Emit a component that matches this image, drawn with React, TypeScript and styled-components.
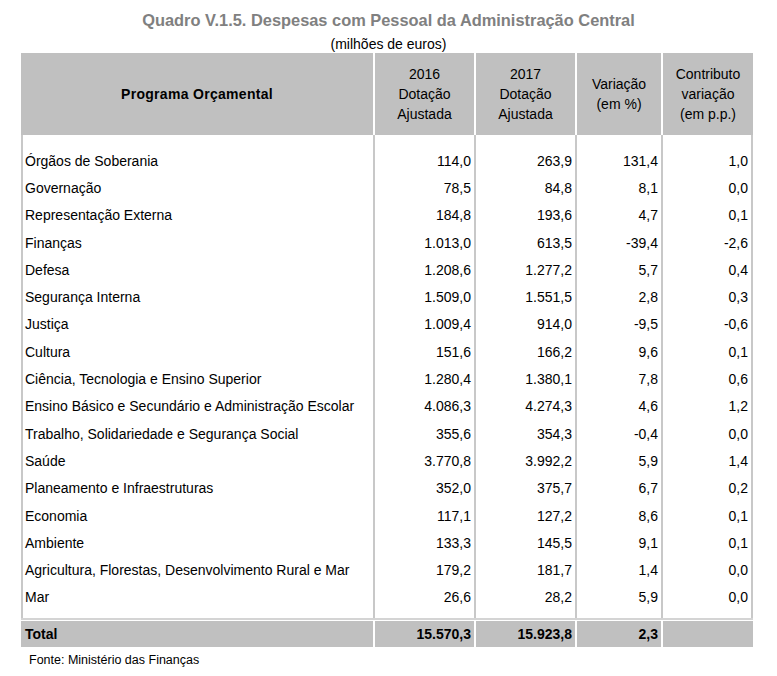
import React from "react";
import styled, { createGlobalStyle } from "styled-components";

const GlobalStyle = createGlobalStyle`
  html, body { margin: 0; padding: 0; background: #ffffff; }
  body { font-family: "Liberation Sans", Arial, Helvetica, sans-serif; color: #000; }
`;

const COLS = "352px 101px 101px 86px 92px";
const HEAD_BG = "#c0c0c0";
const LINE = "#c8c8c8";

const Page = styled.div`
  width: 777px;
  padding-top: 10px;
  box-sizing: border-box;
`;

const Title = styled.h1`
  margin: 0 0 5px;
  text-align: center;
  font-size: 16.4px;
  line-height: 20px;
  font-weight: bold;
  color: #808080;
`;

const Subtitle = styled.div`
  text-align: center;
  font-size: 14px;
  line-height: 18px;
`;

const Table = styled.div`
  margin-left: 21px;
  width: 732px;
`;

const Row = styled.div<{ $h: number }>`
  display: grid;
  grid-template-columns: ${COLS};
  height: ${(p) => p.$h}px;
`;

const HeadCell = styled.div<{ $first?: boolean }>`
  background: ${HEAD_BG};
  border-left: ${(p) => (p.$first ? "none" : "2px solid #ffffff")};
  display: flex;
  align-items: center;
  justify-content: center;
  text-align: center;
  font-size: 14px;
  line-height: 20px;
  font-weight: ${(p) => (p.$first ? "bold" : "normal")};
  letter-spacing: ${(p) => (p.$first ? "0.3px" : "0")};
`;

const Body = styled.div`
  border-bottom: 2px solid #d4d4d4;
  margin-bottom: 1px;
`;

const Cell = styled.div<{ $num?: boolean; $last?: boolean }>`
  box-sizing: border-box;
  border-left: 2px solid ${LINE};
  border-right: ${(p) => (p.$last ? `2px solid ${LINE}` : "none")};
  display: flex;
  align-items: center;
  justify-content: ${(p) => (p.$num ? "flex-end" : "flex-start")};
  padding: ${(p) => (p.$num ? "0 3px 0 0" : "0 0 0 2px")};
  font-size: 14px;
  white-space: nowrap;
`;

const TotalCell = styled.div<{ $num?: boolean; $first?: boolean }>`
  background: ${HEAD_BG};
  border-left: ${(p) => (p.$first ? "none" : "2px solid #ffffff")};
  display: flex;
  align-items: center;
  justify-content: ${(p) => (p.$num ? "flex-end" : "flex-start")};
  padding: ${(p) => (p.$num ? "0 3px 0 0" : "0 0 0 4px")};
  font-size: 14px;
  font-weight: bold;
`;

const Source = styled.div`
  margin-top: 5px;
  padding-left: 29px;
  font-size: 12.5px;
  line-height: 16px;
`;

const rows: string[][] = [
  ["Órgãos de Soberania", "114,0", "263,9", "131,4", "1,0"],
  ["Governação", "78,5", "84,8", "8,1", "0,0"],
  ["Representação Externa", "184,8", "193,6", "4,7", "0,1"],
  ["Finanças", "1.013,0", "613,5", "-39,4", "-2,6"],
  ["Defesa", "1.208,6", "1.277,2", "5,7", "0,4"],
  ["Segurança Interna", "1.509,0", "1.551,5", "2,8", "0,3"],
  ["Justiça", "1.009,4", "914,0", "-9,5", "-0,6"],
  ["Cultura", "151,6", "166,2", "9,6", "0,1"],
  ["Ciência, Tecnologia e Ensino Superior", "1.280,4", "1.380,1", "7,8", "0,6"],
  ["Ensino Básico e Secundário e Administração Escolar", "4.086,3", "4.274,3", "4,6", "1,2"],
  ["Trabalho, Solidariedade e Segurança Social", "355,6", "354,3", "-0,4", "0,0"],
  ["Saúde", "3.770,8", "3.992,2", "5,9", "1,4"],
  ["Planeamento e Infraestruturas", "352,0", "375,7", "6,7", "0,2"],
  ["Economia", "117,1", "127,2", "8,6", "0,1"],
  ["Ambiente", "133,3", "145,5", "9,1", "0,1"],
  ["Agricultura, Florestas, Desenvolvimento Rural e Mar", "179,2", "181,7", "1,4", "0,0"],
  ["Mar", "26,6", "28,2", "5,9", "0,0"],
];

const emptyRow = (h: number, key: string) => (
  <Row $h={h} key={key}>
    {[0, 1, 2, 3, 4].map((i) => (
      <Cell key={i} $last={i === 4} />
    ))}
  </Row>
);

export default function App() {
  return (
    <>
      <GlobalStyle />
      <Page>
        <Title>Quadro V.1.5. Despesas com Pessoal da Administração Central</Title>
        <Subtitle>(milhões de euros)</Subtitle>
        <Table>
          <Row $h={82}>
            <HeadCell $first>Programa Orçamental</HeadCell>
            <HeadCell>
              2016
              <br />
              Dotação
              <br />
              Ajustada
            </HeadCell>
            <HeadCell>
              2017
              <br />
              Dotação
              <br />
              Ajustada
            </HeadCell>
            <HeadCell>
              Variação
              <br />
              (em %)
            </HeadCell>
            <HeadCell>
              Contributo
              <br />
              variação
              <br />
              (em p.p.)
            </HeadCell>
          </Row>
          <Body>
            {emptyRow(12, "top")}
            {rows.map((r) => (
              <Row $h={27.3} key={r[0]}>
                {r.map((v, i) => (
                  <Cell key={i} $num={i > 0} $last={i === 4}>
                    {v}
                  </Cell>
                ))}
              </Row>
            ))}
            {emptyRow(7, "bottom")}
          </Body>
          <Row $h={26}>
            <TotalCell $first>Total</TotalCell>
            <TotalCell $num>15.570,3</TotalCell>
            <TotalCell $num>15.923,8</TotalCell>
            <TotalCell $num>2,3</TotalCell>
            <TotalCell $num />
          </Row>
        </Table>
        <Source>Fonte: Ministério das Finanças</Source>
      </Page>
    </>
  );
}
